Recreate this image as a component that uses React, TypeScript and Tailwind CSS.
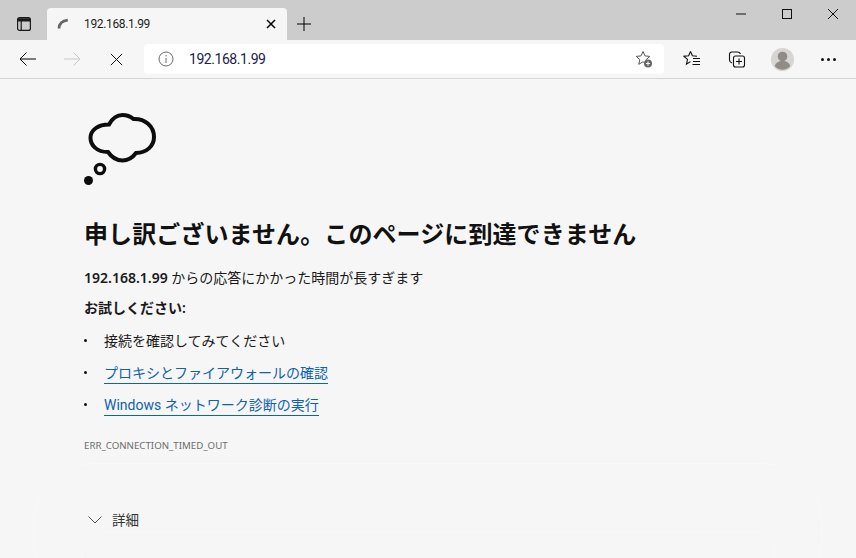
const fontStack = "font-['Noto_Sans','Noto_Sans_CJK_JP',sans-serif]"

function Line({ d, className = "" }: { d: string; className?: string }) {
  return (
    <svg viewBox="0 0 16 16" className={`h-4 w-4 ${className}`} fill="none" stroke="currentColor" strokeWidth="1">
      <path d={d} />
    </svg>
  )
}

function TabStrip() {
  return (
    <div className="flex h-10 items-end bg-[#cccccc] text-black">
      <div className="flex h-10 w-[47px] items-center justify-center pt-[8px]">
        <svg viewBox="0 0 16 16" className="h-4 w-4" fill="none" stroke="#1a1a1a" strokeWidth="1.2">
          <rect x="1.6" y="1.6" width="12.8" height="12.8" rx="2" />
          <path d="M1.6 5h12.8M5.2 5v9.4" />
          <path d="M2 2.2h12v2.8H2z" fill="#1a1a1a" stroke="none" />
        </svg>
      </div>
      <div className="flex h-8 w-[240px] items-center rounded-t-[4px] bg-[#f6f6f6] pl-[10px] pr-[8px]">
        <svg viewBox="0 0 12 12" className="h-3 w-3" fill="none" stroke="#666666" strokeWidth="2.8">
          <path d="M2 10.500C2.200 6 5 2.800 10.800 2.200" />
        </svg>
        <span className="ml-[15px] flex-1 font-['Roboto','Noto_Sans',sans-serif] text-[12px] tracking-[-0.35px] text-[#1c1c1c]">192.168.1.99</span>
        <Line d="M4 4l8 8M12 4l-8 8" className="stroke-[1.5]" />
      </div>
      <div className="flex h-8 w-[34px] items-center justify-center">
        <Line d="M8 1v14M1 8h14" className="h-[16px] w-[16px]" />
      </div>
      <div className="ml-auto flex h-10">
        <div className="flex h-[28px] w-[46px] items-center justify-center">
          <svg viewBox="0 0 10 10" className="h-[10px] w-[10px]" fill="none" stroke="#111111"><path d="M0 5h10" /></svg>
        </div>
        <div className="flex h-[28px] w-[46px] items-center justify-center">
          <svg viewBox="0 0 10 10" className="h-[10px] w-[10px]" fill="none" stroke="#111111"><rect x=".5" y=".5" width="9" height="9" /></svg>
        </div>
        <div className="flex h-[28px] w-[46px] items-center justify-center">
          <svg viewBox="0 0 10 10" className="h-[10px] w-[10px]" fill="none" stroke="#111111"><path d="M0 0l10 10M10 0L0 10" /></svg>
        </div>
      </div>
    </div>
  )
}

function Toolbar() {
  return (
    <div className="flex h-[39px] items-start border-b border-[#d5d5d5] bg-[#f6f6f6] text-black">
      <div className="flex h-[38px] w-[56px] items-center justify-center">
        <Line d="M16 8H0M6.500 1.500L0 8l6.500 6.500" />
      </div>
      <div className="flex h-[38px] w-[32px] items-center justify-center text-[#c8c8c8]">
        <Line d="M0 8h16M9.500 1.500L16 8l-6.500 6.500" />
      </div>
      <div className="flex h-[38px] w-[56px] items-center justify-center">
        <Line d="M2 2l12 12M14 2L2 14" className="h-[15px] w-[15px]" />
      </div>
      <div className="mt-[4px] flex h-[30px] w-[520px] items-center rounded-[4px] bg-white pl-[14px] pr-[11px]">
        <svg viewBox="0 0 16 16" className="h-4 w-4" fill="none" stroke="#6b6b6b" strokeWidth="1">
          <circle cx="8" cy="8" r="7" />
          <path d="M8 7v5M8 4v1.400" />
        </svg>
        <span className="ml-[15px] flex-1 font-['Roboto','Noto_Sans',sans-serif] text-[14px] leading-none tracking-[-0.45px] text-[#202050]">192.168.1.99</span>
        <svg viewBox="0 0 18 18" className="h-[18px] w-[18px]" fill="none" stroke="#555555" strokeWidth="1">
          <path d="M8 1.500l2 4.400 4.800.5-3.600 3.200 1 4.700L8 11.800l-4.200 2.500 1-4.700L1.200 6.400 6 5.900z" />
          <circle cx="13" cy="13.500" r="4" fill="#666666" stroke="none" />
          <path d="M13 11.500v4M11 13.500h4" stroke="#ffffff" />
        </svg>
      </div>
      <div className="flex h-[38px] w-[55px] items-center justify-center pl-[1px]">
        <svg viewBox="0 0 18 18" className="h-[18px] w-[18px]" fill="none" stroke="#111111" strokeWidth="1.1">
          <path d="M7.500 1.500l1.900 4.300 4.600.4M7.500 1.500L5.600 5.800 1 6.300l3.500 3.100-1 4.600 4-2.400" />
          <path d="M10 8.500h7M10 11.500h7M9.500 14.500h7.500" />
        </svg>
      </div>
      <div className="flex h-[38px] w-[36px] items-center justify-center">
        <svg viewBox="0 0 18 18" className="h-[18px] w-[18px]" fill="none" stroke="#111111" strokeWidth="1.1">
          <path d="M4 13C2.500 12.500 1.500 11.500 1.500 10V4.500C1.500 3 2.500 2 4 2h5.500c1.500 0 2.500.8 3 2" />
          <rect x="5.500" y="6" width="11" height="11" rx="2" fill="#f6f6f6" />
          <path d="M11 8.500v6M8 11.500h6" />
        </svg>
      </div>
      <div className="flex h-[38px] w-[54px] items-center justify-center">
        <svg viewBox="0 0 23 23" className="h-[23px] w-[23px]">
          <circle cx="11.500" cy="11.500" r="11.500" fill="#d6d5d3" />
          <circle cx="11.500" cy="8.500" r="4.800" fill="#8f8b87" />
          <path d="M3.800 18c1-3.500 4-5 7.700-5s6.700 1.500 7.700 5c-2 2.500-4.600 3.800-7.700 3.800S5.800 20.500 3.800 18z" fill="#8f8b87" />
        </svg>
      </div>
      <div className="flex h-[38px] w-[38px] items-center justify-center gap-[3px]">
        <span className="h-[3px] w-[3px] rounded-full bg-[#111111]" />
        <span className="h-[3px] w-[3px] rounded-full bg-[#111111]" />
        <span className="h-[3px] w-[3px] rounded-full bg-[#111111]" />
      </div>
    </div>
  )
}

function Thought() {
  return (
    <svg viewBox="0 0 74 76" className="h-[76px] w-[74px]" fill="none" stroke="#0d0d0d" strokeWidth="4">
      <path d="M25 12.500C28 7 33 3 38.500 3C43 3 46.500 4.500 49.500 7C61 6.500 70 14 70 25C70 34 62.500 41 52 41C49 45 44 48.500 38.500 48.500C32.500 48.500 27.500 45 24 40C12.500 40 6.500 33 6.500 26C6.500 18 14 12.500 25 12.500Z" />
      <circle cx="16" cy="57" r="4.600" strokeWidth="3.400" />
      <circle cx="4.500" cy="68.500" r="4.500" fill="#0d0d0d" stroke="none" />
    </svg>
  )
}

const links = ["プロキシとファイアウォールの確認", "Windows ネットワーク診断の実行"]

function Bullet({ children }: { children: React.ReactNode }) {
  return (
    <li className="flex h-[32px] items-center">
      <span className="mr-[17px] h-[3px] w-[3px] rounded-full bg-[#111111]" />
      {children}
    </li>
  )
}

export default function App() {
  return (
    <div className={`h-[558px] w-[856px] overflow-hidden bg-[#f6f6f6] ${fontStack}`}>
      <TabStrip />
      <Toolbar />
      <main className="relative h-[479px] pl-[84px] pt-[33px] text-[14px] text-[#1a1a1a]">
        <Thought />
        <h1 className="mt-[30px] text-[24px] font-semibold leading-[32px] tracking-[0.1px] text-[#111111]">
          申し訳ございません。このページに到達できません
        </h1>
        <p className="mt-[13px] h-[30px] leading-[30px]">
          <strong className="font-semibold">192.168.1.99</strong> からの応答にかかった時間が長すぎます
        </p>
        <p className="h-[30px] font-semibold leading-[30px]">お試しください:</p>
        <ul className="mt-[1px]">
          <Bullet>接続を確認してみてください</Bullet>
          {links.map((label) => (
            <Bullet key={label}>
              <a className="mt-[4px] border-b border-[#0f62ae] font-['Roboto','Noto_Sans_CJK_JP',sans-serif] leading-[19px] text-[#0f62ae]">{label}</a>
            </Bullet>
          ))}
        </ul>
        <p className="mt-[19px] text-[9.7px] leading-[14px] text-[#6d6d6d]">ERR_CONNECTION_TIMED_OUT</p>
        <div className="mt-[57px] flex items-center gap-[10px] pl-[4px] text-[13.5px] text-[#333333]">
          <svg viewBox="0 0 14 8" className="h-[8px] w-[14px]" fill="none" stroke="#555555"><path d="M.5.5L7 7 13.500.5" /></svg>
          詳細
        </div>
        <div className="pointer-events-none absolute left-[33px] top-[384px] h-[140px] w-[789px] rounded-[60px] border border-[#f9f9f9]" />
        <div className="pointer-events-none absolute left-[82px] top-[452px] h-[60px] w-[694px] rounded-[20px] border border-[#f8f8f8]" />
      </main>
    </div>
  )
}
